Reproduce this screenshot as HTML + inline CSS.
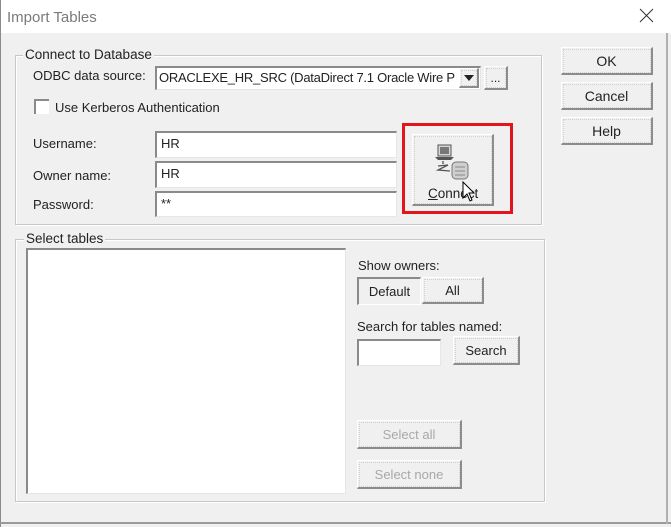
<!DOCTYPE html>
<html><head><meta charset="utf-8"><style>
*{margin:0;padding:0;box-sizing:border-box}
body{width:671px;height:527px;background:#f0f0f0;position:relative;overflow:hidden;font-family:"Liberation Sans",Tahoma,sans-serif;font-size:13px;color:#222}
.a{position:absolute}
.tb{left:0;top:0;width:671px;height:33px;background:#fff}
.grp{border:1px solid #c8c8c8;box-shadow:inset 1px 1px 0 #fff,1px 1px 0 #fff}
.lg{background:#f0f0f0;padding:0 2px;line-height:14px}
.edit{background:#fff;border-top:2px solid #8a8a8a;border-left:2px solid #8a8a8a;border-right:1px solid #e6e6e6;border-bottom:1px solid #e6e6e6;padding:3px 4px;line-height:16px}
.btn{background:#f0f0f0;border-top:1px solid #fff;border-left:1px solid #fff;border-right:2px solid #8c8c8c;border-bottom:2px solid #8c8c8c;outline:1px dotted #d0d0d0;outline-offset:-3px;text-align:center;display:flex;align-items:center;justify-content:center}
.dis{color:#a8a8a8}
</style></head><body>
<div class="a tb"></div>
<div class="a" style="left:0;top:0;width:1px;height:527px;background:#8a8a8a"></div>
<div class="a" style="left:7px;top:9px;font-size:15px;color:#7a7a7a">Import Tables</div>
<svg class="a" style="left:639px;top:8px" width="15" height="15"><path d="M1 1L14 14M14 1L1 14" stroke="#333" stroke-width="1"/></svg>

<div class="a grp" style="left:15px;top:55px;width:527px;height:170px"></div>
<div class="a lg" style="left:23px;top:48px;font-size:13.5px">Connect to Database</div>
<div class="a" style="left:33px;top:68px">ODBC data source:</div>
<div class="a edit" style="left:155px;top:66px;width:326px;height:24px;white-space:nowrap;overflow:hidden;padding:2px 2px;font-size:13px;letter-spacing:-0.25px">ORACLEXE_HR_SRC (DataDirect 7.1 Oracle Wire P</div>
<div class="a btn" style="left:459px;top:68px;width:20px;height:20px"><svg width="10" height="6"><path d="M0 0H10L5 6Z" fill="#222"/></svg></div>
<div class="a btn" style="left:484px;top:66px;width:24px;height:24px;font-size:12px">...</div>
<div class="a" style="left:34px;top:99px;width:15px;height:15px;background:#fff;border-top:2px solid #8a8a8a;border-left:2px solid #8a8a8a"></div>
<div class="a" style="left:55px;top:100px">Use Kerberos Authentication</div>
<div class="a" style="left:33px;top:136px">Username:</div>
<div class="a" style="left:33px;top:168px">Owner name:</div>
<div class="a" style="left:33px;top:197px">Password:</div>
<div class="a edit" style="left:155px;top:131px;width:242px;height:27px">HR</div>
<div class="a edit" style="left:155px;top:161px;width:242px;height:27px">HR</div>
<div class="a edit" style="left:155px;top:191px;width:242px;height:26px">**</div>

<div class="a" style="left:402px;top:123px;width:111px;height:91px;border:3px solid #e3141b"></div>
<div class="a btn" style="left:412px;top:134px;width:82px;height:72px"></div>
<svg class="a" style="left:432px;top:143px" width="40" height="38">
<rect x="6" y="2" width="13" height="11" fill="#d8d8d8" stroke="#555"/><rect x="8" y="4" width="9" height="7" fill="#777"/>
<path d="M3 14H22L19 17H6Z" fill="#555"/><path d="M11 18V21M6 23L16 22L6 27L18 28" stroke="#555" fill="none" stroke-width="1.3"/>
<rect x="20" y="19" width="16" height="17" rx="4" fill="#cfcfcf" stroke="#777"/><path d="M23 24H33M23 28H33M23 32H33" stroke="#888"/>
</svg>
<div class="a" style="left:428px;top:186px;font-size:13.5px"><u>C</u>onnect</div>
<svg class="a" style="left:462px;top:181px" width="14" height="22"><path d="M1 1V17L5 13L8 20L10 19L7 12H12Z" fill="#fff" stroke="#000"/></svg>

<div class="a btn" style="left:561px;top:47px;width:92px;height:28px;font-size:14px">OK</div>
<div class="a btn" style="left:561px;top:82px;width:92px;height:28px;font-size:14px">Cancel</div>
<div class="a btn" style="left:561px;top:117px;width:92px;height:28px;font-size:14px">Help</div>

<div class="a grp" style="left:15px;top:239px;width:530px;height:263px"></div>
<div class="a lg" style="left:24px;top:232px;font-size:13.5px">Select tables</div>
<div class="a edit" style="left:26px;top:248px;width:320px;height:246px"></div>
<div class="a" style="left:358px;top:258px">Show owners:</div>
<div class="a" style="left:357px;top:277px;width:64px;height:28px;border-top:2px solid #8a8a8a;border-left:2px solid #8a8a8a;border-right:1px solid #fff;border-bottom:1px solid #fff;display:flex;align-items:center;justify-content:center">Default</div>
<div class="a btn" style="left:422px;top:277px;width:62px;height:27px">All</div>
<div class="a" style="left:357px;top:319px">Search for tables named:</div>
<div class="a edit" style="left:357px;top:339px;width:84px;height:27px"></div>
<div class="a btn" style="left:453px;top:336px;width:67px;height:29px">Search</div>
<div class="a btn dis" style="left:357px;top:420px;width:105px;height:29px">Select all</div>
<div class="a btn dis" style="left:357px;top:460px;width:105px;height:29px">Select none</div>

<div class="a" style="left:0;top:522px;width:671px;height:2px;background:#9a9a9a"></div>
<div class="a" style="left:666px;top:33px;width:2px;height:491px;background:#b0b0b0"></div>
</body></html>
